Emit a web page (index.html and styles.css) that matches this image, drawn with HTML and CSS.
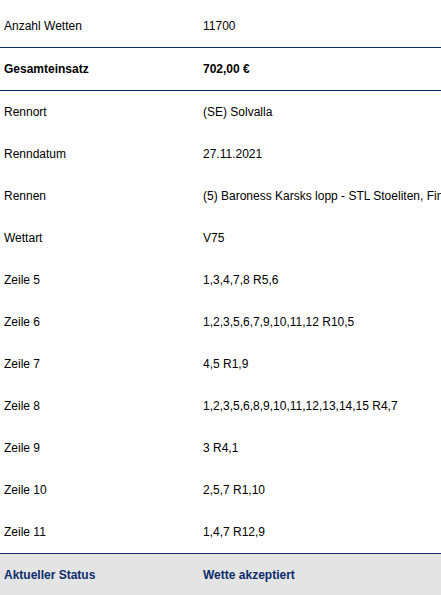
FILE: index.html
```html
<!DOCTYPE html>
<html lang="de">
<head>
<meta charset="utf-8">
<title>Wette</title>
<link rel="stylesheet" href="styles.css">
</head>
<body>
<div class="sheet">
  <div class="row sep"><div class="label">Anzahl Wetten</div><div class="value">11700</div></div>
  <div class="row sep bold"><div class="label">Gesamteinsatz</div><div class="value">702,00 €</div></div>
  <div class="row"><div class="label">Rennort</div><div class="value">(SE) Solvalla</div></div>
  <div class="row"><div class="label">Renndatum</div><div class="value">27.11.2021</div></div>
  <div class="row"><div class="label">Rennen</div><div class="value">(5) Baroness Karsks lopp - STL Stoeliten, Final</div></div>
  <div class="row"><div class="label">Wettart</div><div class="value">V75</div></div>
  <div class="row"><div class="label">Zeile 5</div><div class="value">1,3,4,7,8 R5,6</div></div>
  <div class="row"><div class="label">Zeile 6</div><div class="value">1,2,3,5,6,7,9,10,11,12 R10,5</div></div>
  <div class="row"><div class="label">Zeile 7</div><div class="value">4,5 R1,9</div></div>
  <div class="row"><div class="label">Zeile 8</div><div class="value">1,2,3,5,6,8,9,10,11,12,13,14,15 R4,7</div></div>
  <div class="row"><div class="label">Zeile 9</div><div class="value">3 R4,1</div></div>
  <div class="row"><div class="label">Zeile 10</div><div class="value">2,5,7 R1,10</div></div>
  <div class="row sep"><div class="label">Zeile 11</div><div class="value">1,4,7 R12,9</div></div>
  <div class="row status"><div class="label">Aktueller Status</div><div class="value">Wette akzeptiert</div></div>
</div>
</body>
</html>
```
FILE: styles.css
```css
html, body {
  margin: 0;
  padding: 0;
  background: #ffffff;
  overflow: hidden;
}
body {
  font-family: "Liberation Sans", Arial, sans-serif;
  font-size: 12px;
  color: #000000;
}
.sheet {
  padding-top: 5px;
  width: 700px;
}
.row {
  display: grid;
  grid-template-columns: 199px 1fr;
  height: 42px;
  align-items: center;
  white-space: nowrap;
}
.label, .value {
  padding-left: 4px;
}
.sep {
  border-bottom: 1px solid #0c2d6b;
}
.bold {
  font-weight: bold;
}
.status {
  background: #e4e4e4;
  color: #0c2d6b;
  font-weight: bold;
}
```
